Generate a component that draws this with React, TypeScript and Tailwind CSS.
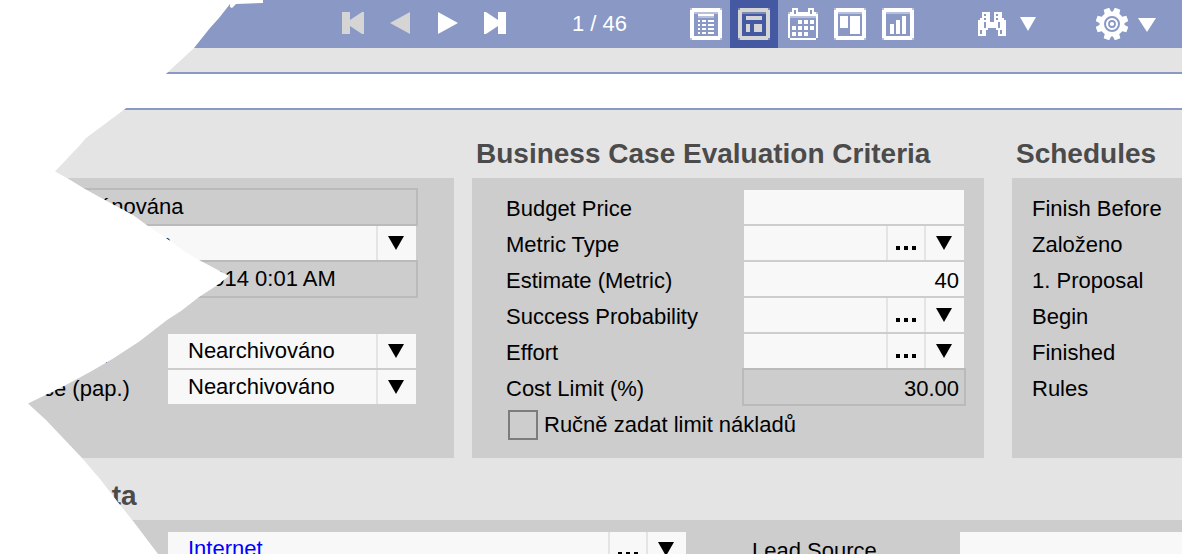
import type { ReactNode } from "react";

function Caret() {
  return (
    <svg width="16" height="14" viewBox="0 0 16 14" className="block shrink-0">
      <path d="M0 0H16L8 14Z" fill="currentColor" />
    </svg>
  );
}

function Dots() {
  return (
    <svg width="20" height="4" viewBox="0 0 20 4" className="mt-[10px] block shrink-0">
      <path d="M0 0h4v4H0zM8 0h4v4H8zM16 0h4v4h-4z" fill="#000" />
    </svg>
  );
}

type FieldProps = {
  className: string;
  textClass?: string;
  readOnly?: boolean;
  dots?: boolean;
  caret?: boolean;
  children?: ReactNode;
};

function Field({ className, textClass = "", readOnly, dots, caret, children }: FieldProps) {
  return (
    <div
      className={`-mb-0.5 flex h-[38px] shrink-0 border-2 ${
        readOnly ? "border-[#bababa] bg-[#cdcdcd]" : "border-transparent bg-[#f8f8f8] bg-clip-padding"
      } ${className}`}
    >
      <div className={`min-w-0 flex-1 whitespace-nowrap leading-[34px] ${textClass}`}>{children}</div>
      {dots && (
        <div className="flex w-[38px] items-center justify-center border-l-2 border-[#e4e4e4]">
          <Dots />
        </div>
      )}
      {caret && (
        <div className="flex w-10 justify-center border-l-2 border-[#e4e4e4] pt-[10px] pr-0.5">
          <Caret />
        </div>
      )}
    </div>
  );
}

function Heading({ children, className = "" }: { children: ReactNode; className?: string }) {
  return (
    <h2 className={`whitespace-nowrap text-[28px] font-bold text-[#4b4b4b] ${className}`}>{children}</h2>
  );
}

function Row({ label, children }: { label: string; children?: ReactNode }) {
  return (
    <div className="flex h-9">
      <span className="w-[236px] shrink-0 whitespace-nowrap pt-[3px] leading-9">{label}</span>
      {children}
    </div>
  );
}

function Frame({ color = "#fff", children }: { color?: string; children: ReactNode }) {
  return (
    <svg width="32" height="32" viewBox="0 0 32 32" fill={color} shapeRendering="crispEdges" className="block">
      <path fillRule="evenodd" d="M2 0H30V2H32V30H30V32H2V30H0V2H2ZM4 4V28H28V4Z" />
      <path d="M0 0h2v2H0zM30 0h2v2h-2zM0 30h2v2H0zM30 30h2v2h-2zM4 4h24v2H4z" opacity=".4" />
      {children}
    </svg>
  );
}

function Toolbar() {
  return (
    <header className="flex h-12 shrink-0 bg-[#8998c5] pl-[342px] text-white">
      <div className="flex pt-3">
        <svg width="22" height="22" className="mr-[26px]" fill="#d5d5d5">
          <path d="M0 0H8V8L20 0H22V22H20L8 14V22H0Z" />
        </svg>
        <svg width="20" height="22" className="mr-7" fill="#d5d5d5">
          <path d="M20 0V22L0 11Z" />
        </svg>
        <svg width="20" height="22" className="mr-[26px]" fill="#fff">
          <path d="M0 0V22L20 11Z" />
        </svg>
        <svg width="22" height="22" fill="#fff">
          <path d="M22 0H14V8L2 0H0V22H2L14 14V22H22Z" />
        </svg>
      </div>
      <span className="ml-[66px] w-[110px] whitespace-nowrap leading-[48px]">1 / 46</span>
      <div className="flex">
        <div className="flex w-12 justify-center pt-2">
          <Frame>
            <path d="M8 6h16v2H8zM8 12h2v2H8zM12 12h4v2h-4zM18 12h6v2h-6zM8 16h2v2H8zM12 16h4v2h-4zM18 16h6v2h-6zM8 20h2v2H8zM12 20h4v2h-4zM18 20h6v2h-6zM8 24h2v2H8zM12 24h4v2h-4zM18 24h6v2h-6z" />
            <path d="M8 8h16v2H8z" opacity=".4" />
          </Frame>
        </div>
        <div className="flex w-12 justify-center bg-[#4459a1] pt-2">
          <Frame color="#d5d5d5">
            <path d="M8 8h16v4H8zM8 16h4v8H8zM16 16h8v8h-8z" />
          </Frame>
        </div>
        <div className="flex w-12 pt-2 pl-[10px]">
          <svg width="30" height="32" viewBox="0 0 30 32" fill="#fff" shapeRendering="crispEdges">
            <path
              fillRule="evenodd"
              d="M4 0H10V4H20V0H26V4H28V6H30V30H28V32H2V30H0V6H2V4H4ZM6 2V6H8V2ZM22 2V6H24V2ZM2 8V30H28V8Z"
            />
            <path d="M2 8h26v2H2zM0 4h2v2H0zM28 4h2v2h-2z" opacity=".4" />
            <path d="M10 12h4v4h-4zM16 12h4v4h-4zM22 12h4v4h-4zM4 18h4v4H4zM10 18h4v4h-4zM16 18h4v4h-4zM22 18h4v4h-4zM4 24h4v4H4zM10 24h4v4h-4zM16 24h4v4h-4z" />
          </svg>
        </div>
        <div className="flex w-12 justify-center pt-2">
          <Frame>
            <path d="M6 8h8v12H6zM16 8h10v18H16z" />
          </Frame>
        </div>
        <div className="flex w-12 justify-center pt-2">
          <Frame>
            <path d="M8 16h4v10H8zM14 12h4v14h-4zM20 8h4v18h-4z" />
          </Frame>
        </div>
      </div>
      <svg width="28" height="24" viewBox="0 0 28 24" fill="#fff" shapeRendering="crispEdges" className="mt-3 ml-[56px]">
        <path
          fillRule="evenodd"
          d="M4 0H12V10H16V0H24V6H26V8H28V24H20V18H18V16H10V18H8V24H0V8H2V6H4ZM6 2V4H8V2ZM6 6V8H8V6ZM18 2V4H20V2ZM18 6V8H20V6ZM2 18V22H4V18ZM6 10V16H8V10ZM20 10V16H22V10ZM22 18V22H24V18Z"
        />
      </svg>
      <div className="mt-[17px] ml-[14px]">
        <Caret />
      </div>
      <svg width="32" height="32" viewBox="-16 -16 32 32" className="mt-2 ml-[60px]">
        <g fill="#fff">
          <circle r="12.5" />
          {[20, 70, 110, 160, 200, 250, 290, 340].map((a) => (
            <path key={a} d="M-3.6 -10L-2.900 -16.300H2.900L3.600 -10Z" transform={`rotate(${a})`} />
          ))}
        </g>
        <circle r="7" fill="none" stroke="#8998c5" strokeWidth="2" />
        <circle r="3" fill="none" stroke="#8998c5" strokeWidth="1.8" />
      </svg>
      <svg width="18" height="14" viewBox="0 0 18 14" fill="#fff" className="mt-[18px] ml-[10px]">
        <path d="M0 0H18L9 14Z" />
      </svg>
    </header>
  );
}

function TornEdge() {
  return (
    <svg width="270" height="554" viewBox="0 0 270 554" className="pointer-events-none absolute top-0 left-0" fill="#fff">
      <path d="M0 0H263V3L236 4L232 8L230 7V4L219 18L210 28L194 48L167 73L125 109L86 138L80 145L55 171.500L67 178L85 189L104 199.500L133 215L148 226L172 242L185 252L199 260L216 269L229 276L216 286L199 297L181 311L167 320L140 341L114 358L90 372L64 386L28 403.500L46 420L82 458L100 479L117 501L133 521L158 554H0Z" />
    </svg>
  );
}

export default function App() {
  return (
    <div className="relative flex h-[554px] w-[1182px] flex-col overflow-hidden bg-[#e4e4e4] font-['Liberation_Sans',Arial,sans-serif] text-[22px] text-black">
      <Toolbar />
      <div className="mt-6 h-[38px] shrink-0 border-y-2 border-[#8998c5] bg-white" />

      <main className="flex h-[348px] shrink-0">
        <section className="mt-[68px] mr-[18px] h-[280px] w-[454px] shrink-0 bg-[#cdcdcd] pt-[10px]">
          <div className="flex h-9">
            <Field className="w-[418px]" textClass="pl-[97px]" readOnly>
              ánována
            </Field>
          </div>
          <div className="flex h-9">
            <Field className="w-[418px]" textClass="pl-[157px]" caret>
              n
            </Field>
          </div>
          <div className="mb-9 flex h-9">
            <Field className="w-[418px]" textClass="pl-[198px]" readOnly>
              2014 0:01 AM
            </Field>
          </div>
          <div className="flex h-9">
            <span className="w-[166px] shrink-0 pt-[3px] pl-[103px] leading-9">,</span>
            <Field className="w-[252px]" textClass="pl-5" caret>
              Nearchivováno
            </Field>
          </div>
          <div className="flex h-9">
            <span className="w-[166px] shrink-0 whitespace-nowrap pt-[3px] pl-[43px] leading-9">ce (pap.)</span>
            <Field className="w-[252px]" textClass="pl-5" caret>
              Nearchivováno
            </Field>
          </div>
        </section>

        <section className="mr-7 w-[512px] shrink-0">
          <Heading className="h-[68px] pl-1 leading-[88px]">Business Case Evaluation Criteria</Heading>
          <div className="h-[280px] bg-[#cdcdcd] pt-[10px] pl-[34px]">
            <Row label="Budget Price">
              <Field className="w-56" />
            </Row>
            <Row label="Metric Type">
              <Field className="w-56" dots caret />
            </Row>
            <Row label="Estimate (Metric)">
              <Field className="w-56" textClass="pt-0.5 pr-[5px] text-right">
                40
              </Field>
            </Row>
            <Row label="Success Probability">
              <Field className="w-56" dots caret />
            </Row>
            <Row label="Effort">
              <Field className="w-56" dots caret />
            </Row>
            <Row label="Cost Limit (%)">
              <Field className="w-56" textClass="pt-0.5 pr-[5px] text-right" readOnly>
                30.00
              </Field>
            </Row>
            <label className="flex h-9 pl-0.5">
              <span className="mt-1.5 mr-1.5 size-[30px] border-2 border-[#7c7c7c]" />
              <span className="whitespace-nowrap pt-[3px] leading-9">Ručně zadat limit nákladů</span>
            </label>
          </div>
        </section>

        <section className="w-[170px] shrink-0">
          <Heading className="h-[68px] pl-1 leading-[88px]">Schedules</Heading>
          <div className="h-[280px] bg-[#cdcdcd] pt-[10px] pl-5">
            {["Finish Before", "Založeno", "1. Proposal", "Begin", "Finished", "Rules"].map((label) => (
              <div key={label} className="h-9 whitespace-nowrap pt-[3px] leading-9">
                {label}
              </div>
            ))}
          </div>
        </section>
      </main>

      <section className="shrink-0">
        <Heading className="h-[62px] pl-[76px] leading-[76px]">Data</Heading>
        <div className="flex h-[60px] bg-[#cdcdcd] pt-[10px] pl-[166px]">
          <Field className="w-[522px]" textClass="pl-5 text-[#0000ff]" dots caret>
            Internet
          </Field>
          <span className="w-[270px] shrink-0 whitespace-nowrap pt-[3px] pl-16 leading-9">Lead Source</span>
          <Field className="w-[240px]" />
        </div>
      </section>

      <TornEdge />
    </div>
  );
}
